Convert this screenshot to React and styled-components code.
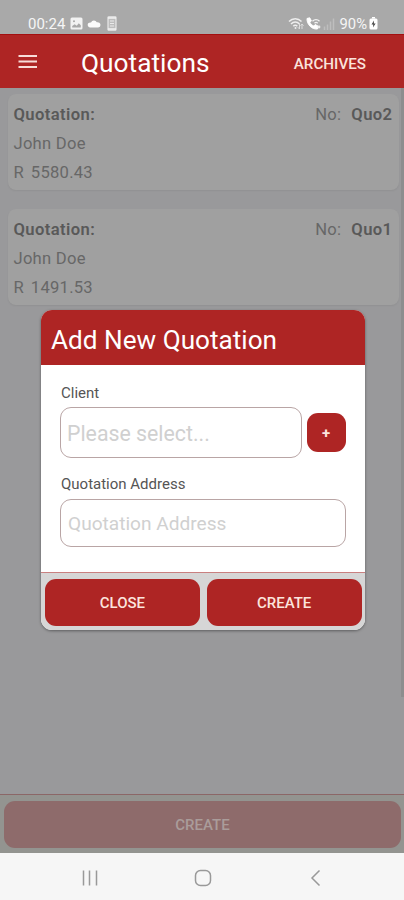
import React from "react";
import styled, { createGlobalStyle } from "styled-components";

const quotations = [
    { id: 2, number: "Quo2", client: "John Doe", total: "R 5580.43" },
    { id: 1, number: "Quo1", client: "John Doe", total: "R 1491.53" },
];

const StatusBar = () => (
    <StatusBarStyled>
        <div className="status__group">
            <span className="status__time">00:24</span>
            <svg width="13" height="13" viewBox="0 0 13 13">
                <path fill="#f2f2f2" fillRule="evenodd" d="M2 .5h9A1.5 1.5 0 0 1 12.500 2v9a1.500 1.500 0 0 1-1.500 1.500H2A1.500 1.500 0 0 1 .5 11V2A1.500 1.500 0 0 1 2 .5zM2.200 10.500h8.600V8.200L8.800 6.300 6.700 8.700 4.700 7.200 2.200 9zM4 3.200a1 1 0 1 0 0 2 1 1 0 0 0 0-2z" />
            </svg>
            <svg width="14" height="9" viewBox="0 0 14 9">
                <path fill="#fafafa" d="M3 8.500A2.700 2.700 0 0 1 1.200 4.300 3.500 3.500 0 0 1 4 3.500 3.200 3.200 0 0 1 9.800 3.300 2.800 2.800 0 0 1 13.500 6 2.500 2.500 0 0 1 11.200 8.500z" />
            </svg>
            <svg className="status__card" width="10" height="15" viewBox="0 0 10 15">
                <rect x="1" y=".8" width="8" height="13.400" rx=".8" fill="#bdbdbd" stroke="#e8e8e8" strokeWidth="1.200" />
                <path d="M1 2h8M1 13h8" stroke="#f2f2f2" strokeWidth="1.500" />
                <path d="M3 5h4M3 7.500h4M3 10h4" stroke="#eaeaea" />
            </svg>
        </div>
        <div className="status__group status__group--right">
            <svg width="16" height="13" viewBox="0 0 16 13">
                <g fill="none" stroke="#eee" strokeWidth="1.500">
                    <path d="M1 4.500C4.500.8 10 .8 13.500 4.500M3 7c2.500-2.700 6-2.700 8.500 0M5.300 9.200c1.200-1.300 2.800-1.300 4 0" />
                </g>
                <circle cx="7.500" cy="11" r="1" fill="#eee" />
                <path d="M11.500 7v5M9.800 10.200l1.700 1.800M14 12V7M12.500 8.700L14 7l1.500 1.700" stroke="#dedede" fill="none" />
            </svg>
            <svg width="15" height="13" viewBox="0 0 15 13">
                <path d="M1 1.500l2.700-.7 1.700 3-1.500 1.500c.8 1.700 2 2.900 3.800 3.700l1.500-1.500 3 1.700-.7 2.800C6 12.700 .7 7.500 1 1.500z" fill="#fff" stroke="#fff" />
                <path d="M6.500 4.200c2-2.200 5-2.200 7 0M8.500 6.200c1-1 2.200-1 3.200 0" fill="none" stroke="#f2f2f2" strokeWidth="1.300" />
                <circle cx="13" cy="10" r="1.400" fill="#eee" />
            </svg>
            <svg width="12" height="12" viewBox="0 0 12 12">
                <path d="M1.500 8.500V12M4.500 6.500V12M7.500 3.500V12M10.500 .5V12" stroke="#bebebe" strokeWidth="1.500" />
            </svg>
            <span className="status__battery">90%</span>
            <svg width="9" height="13" viewBox="0 0 9 13">
                <path d="M3 0h3v1.500H3z" fill="#fff" />
                <rect x=".5" y="1.500" width="8" height="11" rx="1.500" fill="#fff" />
                <path d="M5 3.500L2.500 7.500h1.800L4 10.500l2.600-4H4.800z" fill="#444" />
            </svg>
        </div>
    </StatusBarStyled>
);

const QuotationCard = ({ quotation }) => (
    <QuotationCardStyled>
        <div className="card__heading">
            <strong>Quotation:</strong>
            <span>No:</span>
            <strong className="card__number">{quotation.number}</strong>
        </div>
        <div>{quotation.client}</div>
        <div className="card__total">{quotation.total}</div>
    </QuotationCardStyled>
);

const AddQuotationModal = () => (
    <Overlay>
        <Modal>
            <ModalHeader>Add New Quotation</ModalHeader>
            <ModalBody>
                <Label htmlFor="client">Client</Label>
                <FieldRow>
                    <Field id="client" placeholder="Please select..." $height={51} $size={21.3} $indent={6} $drop={2} />
                    <AddButton>+</AddButton>
                </FieldRow>
                <Label htmlFor="address" $tall>Quotation Address</Label>
                <Field id="address" placeholder="Quotation Address" $height={48} $size={19.1} $indent={7} $drop={0} />
            </ModalBody>
            <ModalFooter>
                <Button>CLOSE</Button>
                <Button>CREATE</Button>
            </ModalFooter>
        </Modal>
    </Overlay>
);

const App = () => (
    <Screen>
        <GlobalStyle />
        <StatusBar />
        <Header>
            <svg width="20" height="16" viewBox="0 0 20 16">
                <path d="M.5 2h18.500M.5 7.500h18.500M.5 13h18.500" stroke="#f8dcd8" strokeWidth="2" />
            </svg>
            <h1>Quotations</h1>
            <button>ARCHIVES</button>
        </Header>
        <Content>
            <List>
                {quotations.map(quotation => (
                    <QuotationCard key={quotation.id} quotation={quotation} />
                ))}
            </List>
            <ScrollBar />
        </Content>
        <Footer>
            <Button $dimmed>CREATE</Button>
        </Footer>
        <NavBar>
            <svg width="18" height="18" viewBox="0 0 18 18">
                <path d="M2.500 1.500v15M8.500 1.500v15M15.500 1.500v15" />
            </svg>
            <svg width="18" height="18" viewBox="0 0 18 18">
                <rect x="1.500" y="1.500" width="15" height="15" rx="5" />
            </svg>
            <svg width="18" height="18" viewBox="0 0 18 18">
                <path d="M12.500 1.500L5 9l7.500 7.500" />
            </svg>
        </NavBar>
        <AddQuotationModal />
    </Screen>
);

const GlobalStyle = createGlobalStyle`
    * {
        box-sizing: border-box;
    }

    body {
        margin: 0;
        font-family: Roboto, sans-serif;
    }

    button, input {
        font-family: inherit;
    }
`;

const Screen = styled.div`
    position: relative;
    display: flex;
    flex-direction: column;
    width: 404px;
    height: 900px;
    overflow: hidden;
    background-color: #99999b;
`;

const StatusBarStyled = styled.div`
    display: flex;
    justify-content: space-between;
    height: 34px;
    padding: 13px 26px 0 28px;
    background-color: #a9a9a9;
    color: #f5f5f5;

    .status__group {
        display: flex;
        align-items: center;
        gap: 4px;
        height: 21px;
    }

    .status__group--right {
        gap: 2px;
    }

    .status__time {
        width: 38px;
        font-size: 15px;
    }

    .status__card {
        margin-left: 2px;
    }

    .status__battery {
        margin-left: 3px;
        font-size: 14.8px;
    }
`;

const Header = styled.header`
    display: flex;
    align-items: center;
    height: 54px;
    padding: 0 38px 0 18px;
    background-color: #ae2524;
    border-top: 1px solid #a30f10;
    color: #fff;

    h1 {
        flex: 1;
        margin: 2px 0 0 43px;
        font-size: 26.3px;
        font-weight: 400;
    }

    button {
        margin-top: 4px;
        padding: 0;
        border: none;
        background: none;
        color: #fbe3dc;
        font-size: 15.2px;
        font-weight: 500;
    }
`;

const Content = styled.main`
    display: flex;
    flex: 1;
`;

const List = styled.div`
    display: flex;
    flex: 1;
    flex-direction: column;
    gap: 19px;
    padding: 6px 2px 0 8px;
`;

const ScrollBar = styled.div`
    width: 3px;
    height: 609px;
    background-color: #8d8d8e;
`;

const QuotationCardStyled = styled.article`
    height: 96px;
    padding: 6px 6.5px 0 5.5px;
    border-radius: 8px;
    background-color: #a0a0a0;
    box-shadow: 0 1px 2px rgba(0, 0, 0, 0.06);
    color: #676767;
    font-size: 16.6px;
    line-height: 29px;
    letter-spacing: 0.25px;

    .card__heading {
        display: flex;
    }

    .card__heading > strong {
        color: #595959;
        font-weight: 600;
        letter-spacing: 0.4px;
    }

    .card__heading > span {
        margin-left: auto;
    }

    .card__number {
        margin-left: 10px;
    }

    .card__total {
        word-spacing: 2.5px;
    }
`;

const Footer = styled.footer`
    display: flex;
    height: 59px;
    padding: 6px 3px 5px 4px;
    border-top: 1px solid #8b6767;
    background-color: #939490;
`;

const Button = styled.button`
    flex: 1;
    padding: 0;
    border: none;
    border-radius: 11px;
    background-color: ${({ $dimmed }) => ($dimmed ? "#8e6b6b" : "#ae2524")};
    color: ${({ $dimmed }) => ($dimmed ? "#aa9c9a" : "#fce4dd")};
    font-size: 15px;
    font-weight: 500;
`;

const NavBar = styled.nav`
    display: flex;
    align-items: center;
    justify-content: space-between;
    height: 47px;
    padding: 2px 79px 0 81px;
    background-color: #f6f6f6;

    svg {
        fill: none;
        stroke: #999;
        stroke-width: 1.5;
    }
`;

const Overlay = styled.div`
    position: absolute;
    inset: 0;
    padding: 310px 39.5px 0 41px;
`;

const Modal = styled.section`
    height: 320px;
    overflow: hidden;
    border-radius: 11px;
    background-color: #fff;
    box-shadow: 0 1px 3px rgba(0, 0, 0, 0.4);
`;

const ModalHeader = styled.h2`
    height: 55px;
    margin: 0;
    padding: 3px 10px 0;
    background-color: #ae2524;
    color: #fff;
    font-size: 26.15px;
    font-weight: 400;
    line-height: 55px;
`;

const ModalBody = styled.div`
    display: flex;
    flex-direction: column;
    height: 207px;
    padding: 18px 19px 0;
`;

const Label = styled.label`
    height: ${({ $tall }) => ($tall ? 25 : 24)}px;
    padding-left: 1px;
    color: #555;
    font-size: 15px;
    line-height: 21px;
`;

const FieldRow = styled.div`
    display: flex;
    align-items: center;
    gap: 5px;
    margin-bottom: 16px;
`;

const Field = styled.input`
    flex: 1 0 auto;
    width: 0;
    min-width: 0;
    height: ${({ $height }) => $height}px;
    padding: ${({ $drop }) => $drop}px 6px 0 ${({ $indent }) => $indent}px;
    border: 1px solid #b9a5a5;
    border-radius: 11px;
    background-color: #fff;
    font-size: ${({ $size }) => $size}px;

    &::placeholder {
        color: #d0d0d0;
    }

    ${ModalBody} > & {
        flex: none;
        width: 100%;
    }
`;

const AddButton = styled.button`
    width: 39px;
    height: 39px;
    padding: 0;
    border: none;
    border-radius: 11px;
    background-color: #ae2524;
    color: #fce4dd;
    font-size: 15px;
    font-weight: 700;
`;

const ModalFooter = styled.div`
    display: flex;
    gap: 7px;
    height: 58px;
    padding: 6px 3px 4px 4px;
    border-top: 1px solid #c98080;
    background-color: #d6d6d6;
`;

export default App;
